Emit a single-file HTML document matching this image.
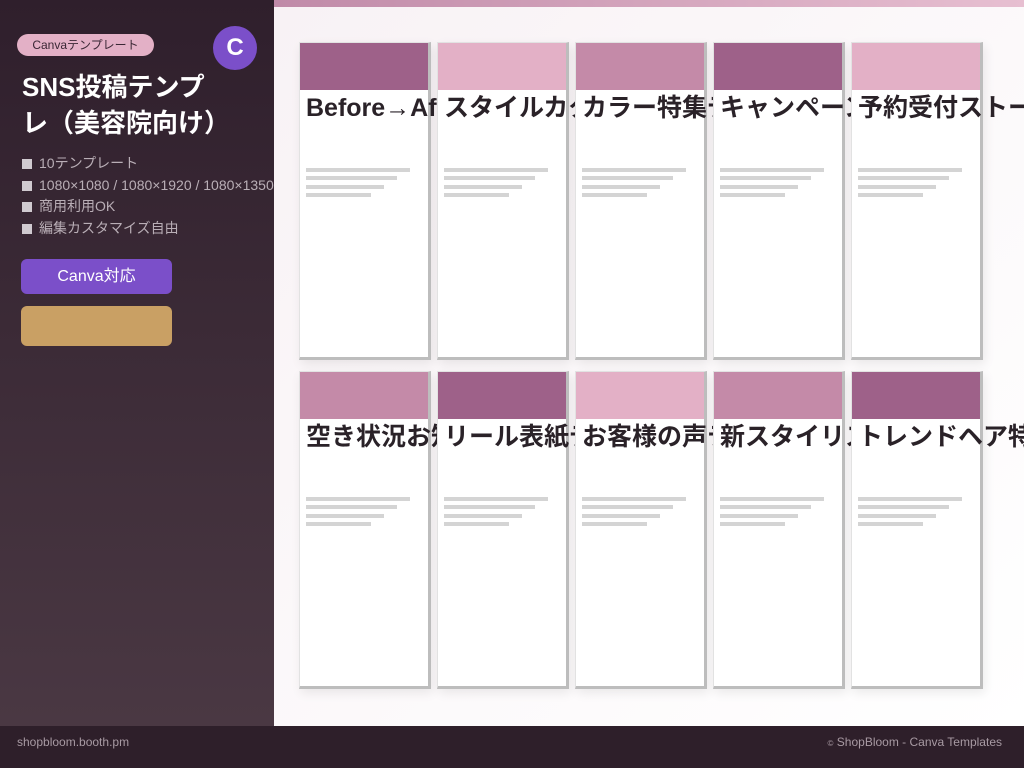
<!DOCTYPE html>
<html><head><meta charset="utf-8"><style>
*{margin:0;padding:0;box-sizing:border-box}
body{width:1024px;height:768px;overflow:hidden;position:relative;font-family:"Liberation Sans","Noto Sans CJK JP",sans-serif;background:#fbf7f9}
.side{position:absolute;left:0;top:0;width:274px;height:726px;background:linear-gradient(#2f1f2c,#4a3843);}
.main{position:absolute;left:274px;top:0;width:750px;height:726px;background:linear-gradient(135deg,#f8f2f5,#ffffff);overflow:hidden}
.bar{position:absolute;left:0;top:0;width:750px;height:7px;background:linear-gradient(90deg,#c08aa8,#e7bfd1)}
.foot{position:absolute;left:0;top:726px;width:1024px;height:42px;background:#2e1f2a;color:#a89aa3;font-size:12px}
.tag{position:absolute;left:17px;top:34px;width:137px;height:22px;border-radius:11px;background:#e3b0c6;color:#3a2735;font-size:12px;line-height:22px;text-align:center}
.logo{position:absolute;left:213px;top:26px;width:44px;height:44px;border-radius:50%;background:#7b4fc9;color:#fff;font-size:24px;line-height:44px;text-align:center;font-weight:bold}
h1{position:absolute;left:22px;top:69px;color:#fff;font-size:26px;line-height:36px;font-weight:bold;width:202px}
.list{position:absolute;left:22px;top:153px;color:#b9aeb6;font-size:14px;line-height:21.7px;white-space:nowrap;width:252px;overflow:hidden}
.list span{display:inline-block;width:10px;height:10px;background:#d0cad0;margin-right:7px;vertical-align:-1px}
.b1{position:absolute;left:21px;top:259px;width:151px;height:35px;border-radius:6px;background:#7b4fc9;color:#fff;font-size:16px;line-height:35px;text-align:center}
.b2{position:absolute;left:21px;top:306px;width:151px;height:40px;border-radius:6px;background:#c9a064}
.card{position:absolute;width:132px;height:318px;background:#fff;border:1px solid #e2e2e2;border-right:3px solid #bdbdbd;border-bottom:3px solid #bdbdbd;box-shadow:2px 4px 10px rgba(0,0,0,.08)}
.card .h{height:47px}
.card .t{font-size:25px;font-weight:bold;color:#2a2228;white-space:nowrap;padding-left:6px;margin-top:2px;line-height:32px}
.card .l{position:absolute;left:6px;height:4px;background:#d4d4d4}
</style></head><body>
<div class="side"></div>
<div class="tag">Canvaテンプレート</div>
<div class="logo">C</div>
<h1>SNS投稿テンプレ（美容院向け）</h1>
<div class="list"><span></span>10テンプレート<br><span></span>1080×1080 / 1080×1920 / 1080×1350<br><span></span>商用利用OK<br><span></span>編集カスタマイズ自由</div>
<div class="b1">Canva対応</div>
<div class="b2"></div>
<div class="main">
<div class="bar"></div>
<div class="card" style="left:25px;top:42px"><div class="h" style="background:#9e6189"></div><div class="t">Before→After</div><div class="l" style="top:125px;width:104px"></div><div class="l" style="top:133px;width:91px"></div><div class="l" style="top:142px;width:78px"></div><div class="l" style="top:150px;width:65px"></div></div>
<div class="card" style="left:163px;top:42px"><div class="h" style="background:#e3b0c6"></div><div class="t">スタイルカタログ</div><div class="l" style="top:125px;width:104px"></div><div class="l" style="top:133px;width:91px"></div><div class="l" style="top:142px;width:78px"></div><div class="l" style="top:150px;width:65px"></div></div>
<div class="card" style="left:301px;top:42px"><div class="h" style="background:#c48aa8"></div><div class="t">カラー特集デザイン</div><div class="l" style="top:125px;width:104px"></div><div class="l" style="top:133px;width:91px"></div><div class="l" style="top:142px;width:78px"></div><div class="l" style="top:150px;width:65px"></div></div>
<div class="card" style="left:439px;top:42px"><div class="h" style="background:#9e6189"></div><div class="t">キャンペーン告知</div><div class="l" style="top:125px;width:104px"></div><div class="l" style="top:133px;width:91px"></div><div class="l" style="top:142px;width:78px"></div><div class="l" style="top:150px;width:65px"></div></div>
<div class="card" style="left:577px;top:42px"><div class="h" style="background:#e3b0c6"></div><div class="t">予約受付ストーリー</div><div class="l" style="top:125px;width:104px"></div><div class="l" style="top:133px;width:91px"></div><div class="l" style="top:142px;width:78px"></div><div class="l" style="top:150px;width:65px"></div></div>

<div class="card" style="left:25px;top:371px"><div class="h" style="background:#c48aa8"></div><div class="t">空き状況お知らせ</div><div class="l" style="top:125px;width:104px"></div><div class="l" style="top:133px;width:91px"></div><div class="l" style="top:142px;width:78px"></div><div class="l" style="top:150px;width:65px"></div></div>
<div class="card" style="left:163px;top:371px"><div class="h" style="background:#9e6189"></div><div class="t">リール表紙デザイン</div><div class="l" style="top:125px;width:104px"></div><div class="l" style="top:133px;width:91px"></div><div class="l" style="top:142px;width:78px"></div><div class="l" style="top:150px;width:65px"></div></div>
<div class="card" style="left:301px;top:371px"><div class="h" style="background:#e3b0c6"></div><div class="t">お客様の声テンプレ</div><div class="l" style="top:125px;width:104px"></div><div class="l" style="top:133px;width:91px"></div><div class="l" style="top:142px;width:78px"></div><div class="l" style="top:150px;width:65px"></div></div>
<div class="card" style="left:439px;top:371px"><div class="h" style="background:#c48aa8"></div><div class="t">新スタイリスト紹介</div><div class="l" style="top:125px;width:104px"></div><div class="l" style="top:133px;width:91px"></div><div class="l" style="top:142px;width:78px"></div><div class="l" style="top:150px;width:65px"></div></div>
<div class="card" style="left:577px;top:371px"><div class="h" style="background:#9e6189"></div><div class="t">トレンドヘア特集</div><div class="l" style="top:125px;width:104px"></div><div class="l" style="top:133px;width:91px"></div><div class="l" style="top:142px;width:78px"></div><div class="l" style="top:150px;width:65px"></div></div>
</div>
<div class="foot"><span style="position:absolute;left:17px;top:9px">shopbloom.booth.pm</span><span style="position:absolute;right:22px;top:9px"><span style="font-size:8px">©</span> ShopBloom - Canva Templates</span></div>
</body></html>
